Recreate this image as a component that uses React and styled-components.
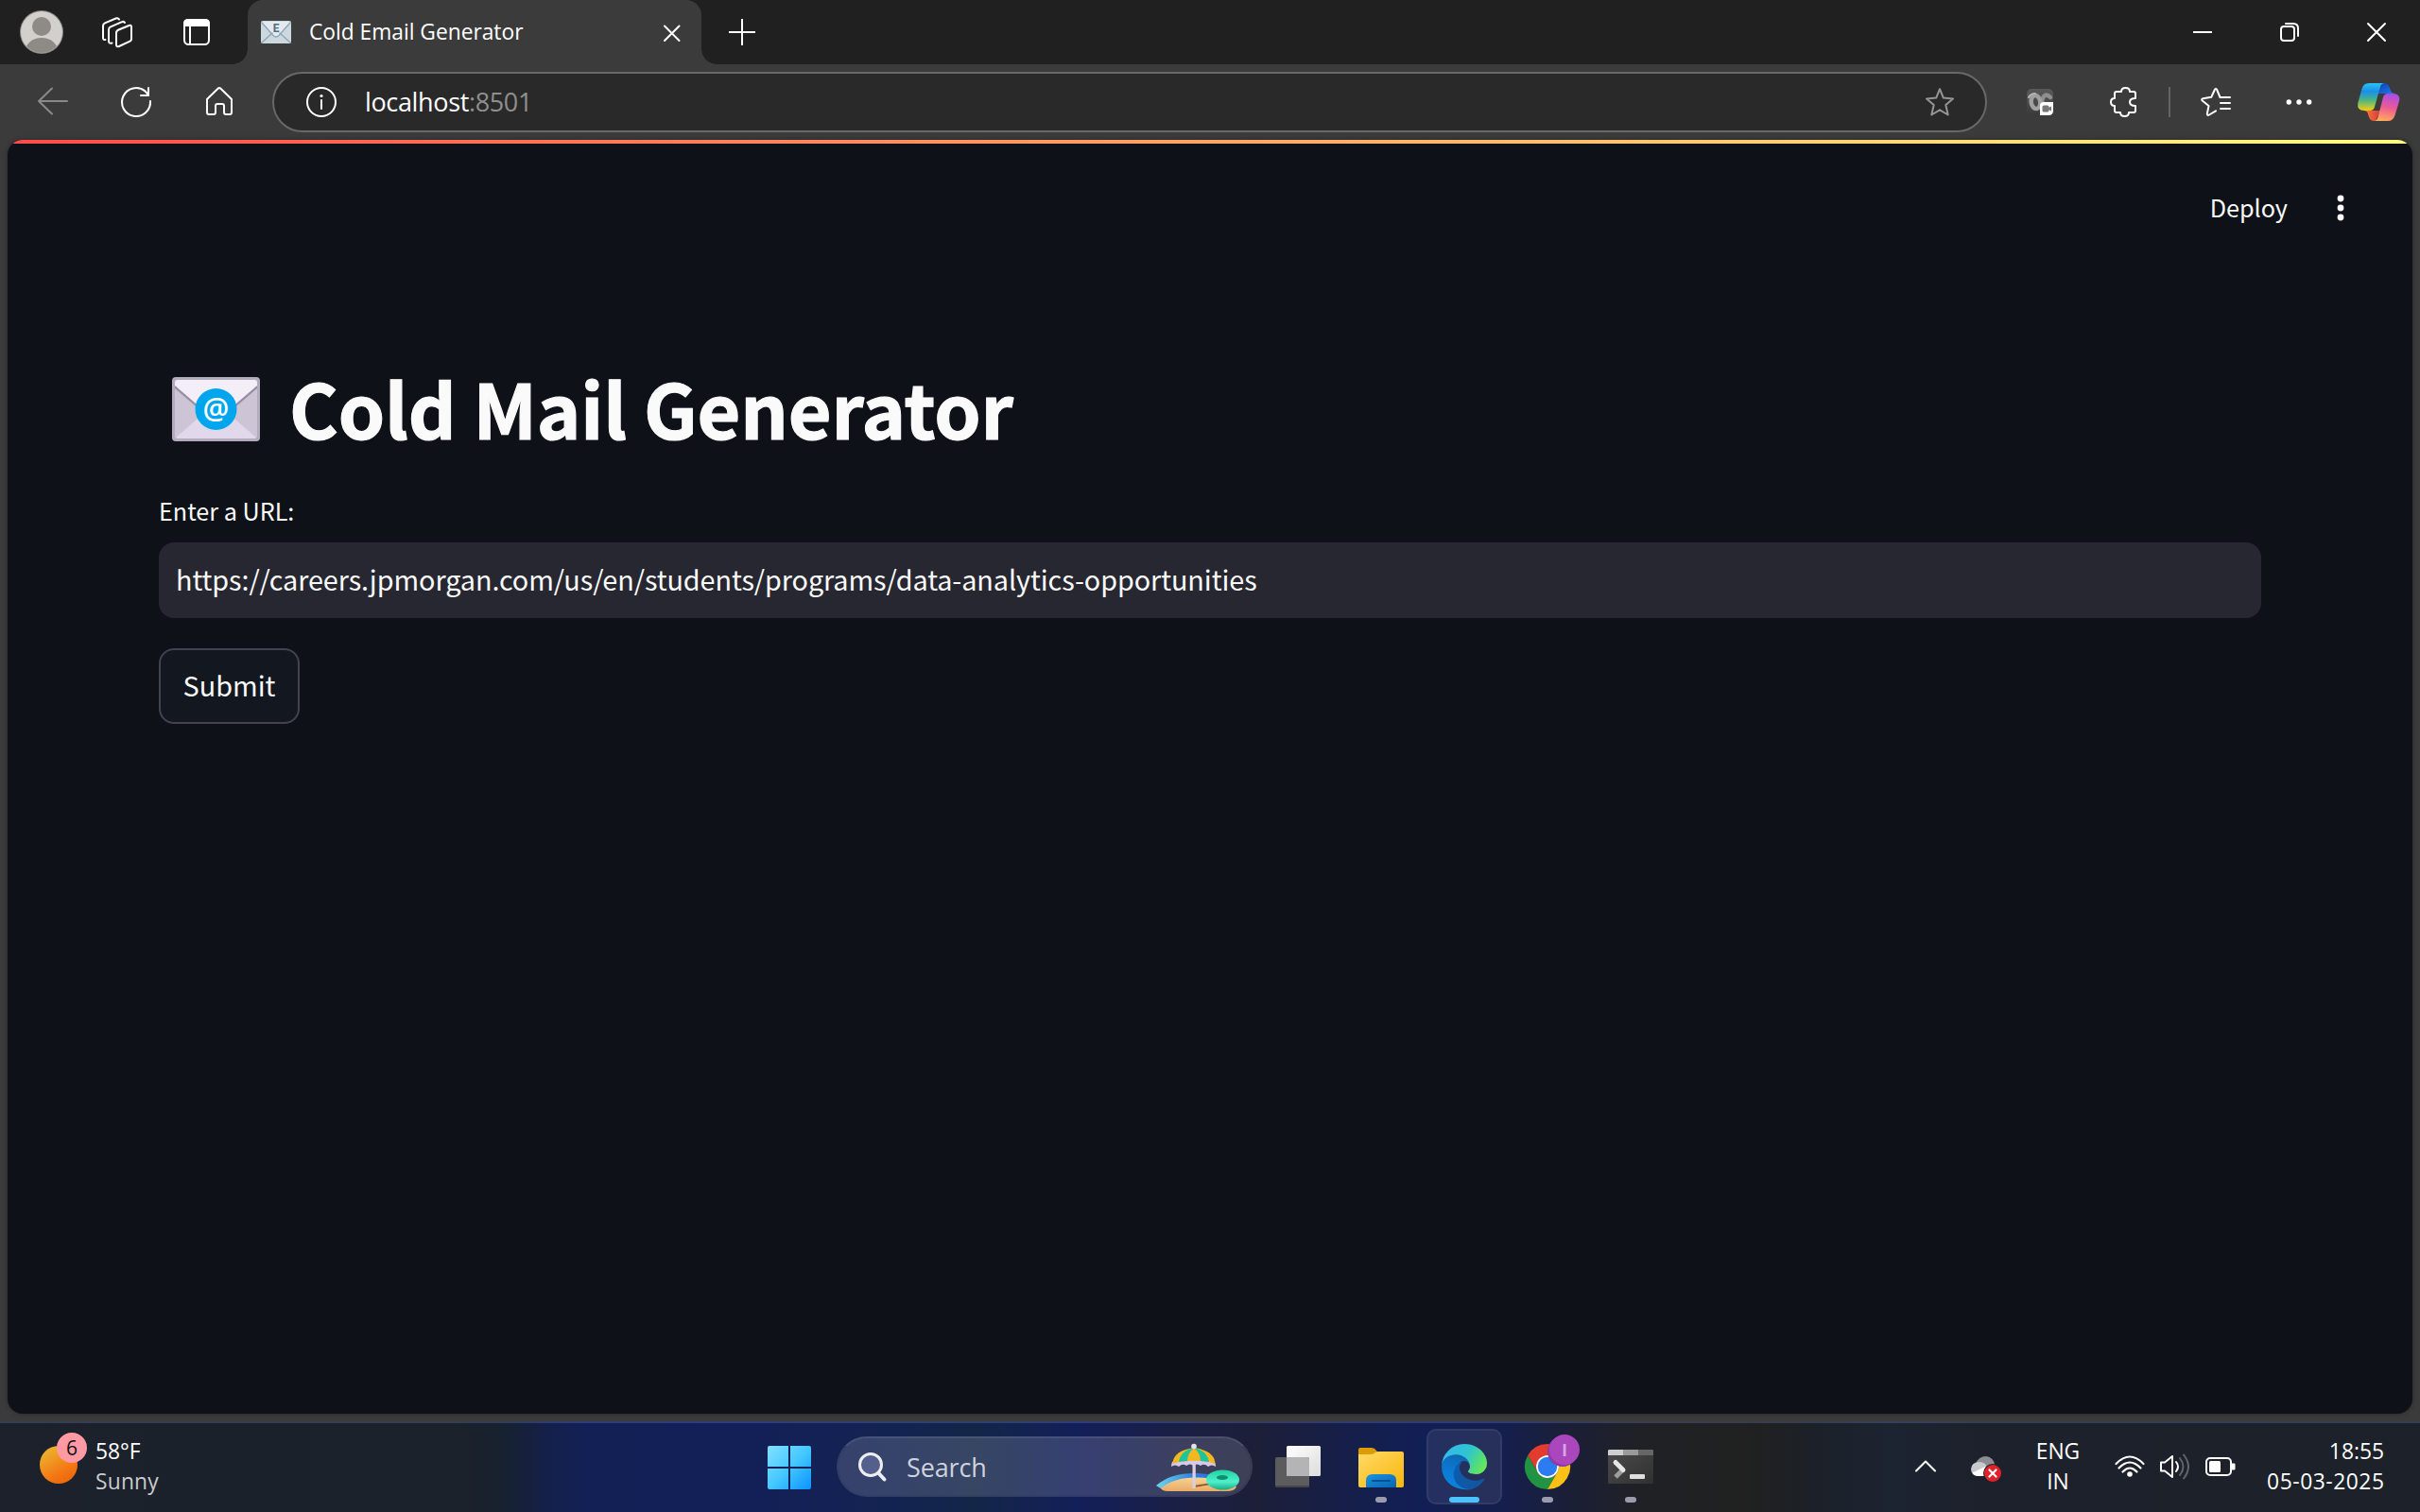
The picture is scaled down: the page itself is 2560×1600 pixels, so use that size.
import React from "react";
import styled, { createGlobalStyle } from "styled-components";

const ui = `"Open Sans", "Noto Sans", sans-serif`;
const source = `"Noto Sans CJK SC", "Noto Sans", sans-serif`;

const GlobalStyle = createGlobalStyle`
  * { box-sizing: border-box; }
  body { margin: 0; background: #3b3b3b; overflow: hidden; }
  button, input { font: inherit; color: inherit; }
`;

const Screen = styled.div`
  width: 2560px;
  height: 1600px;
  display: flex;
  flex-direction: column;
  background: #3b3b3b;
  color: #fff;
  font-family: ${ui};
`;

const Svg = styled.svg`
  display: block;
  flex: none;
  margin-left: ${(p) => p.$ml || 0}px;
  overflow: visible;
`;

function Icon({ box, ml, children, ...rest }) {
  const [, , w, h] = box.split(" ");
  return (
    <Svg viewBox={box} width={w} height={h} $ml={ml} fill="none" stroke="#fff" strokeWidth="2" strokeLinecap="round" strokeLinejoin="round" {...rest}>
      {children}
    </Svg>
  );
}

/* ---------- tab strip ---------- */
const TabStrip = styled.header`
  height: 68px;
  flex: none;
  display: flex;
  align-items: center;
  background: #202020;
  padding: 0 36px 0 21px;
`;

const Tab = styled.div`
  position: relative;
  width: 480px;
  height: 68px;
  margin-left: 38px;
  padding: 0 21px 0 14px;
  display: flex;
  align-items: center;
  background: #3b3b3b;
  border-radius: 16px 16px 0 0;
  &::before,
  &::after {
    content: "";
    position: absolute;
    bottom: 0;
    width: 16px;
    height: 16px;
  }
  &::before {
    left: -16px;
    background: radial-gradient(circle at 0 0, transparent 15.5px, #3b3b3b 16px);
  }
  &::after {
    right: -16px;
    background: radial-gradient(circle at 100% 0, transparent 15.5px, #3b3b3b 16px);
  }
`;

const TabTitle = styled.span`
  flex: 1;
  margin-left: 19px;
  font-size: 22.8px;
  letter-spacing: -0.02px;
  line-height: 32px;
  white-space: nowrap;
`;

const Spacer = styled.div`
  flex: 1;
`;

/* ---------- toolbar ---------- */
const Toolbar = styled.nav`
  height: 80px;
  flex: none;
  display: flex;
  align-items: center;
  padding: 0 22px 0 38px;
`;

const AddressBar = styled.div`
  width: 1814px;
  height: 64px;
  margin-left: 40px;
  padding: 0 30px 0 32px;
  display: flex;
  align-items: center;
  background: #292929;
  border: 2px solid #686868;
  border-radius: 32px;
`;

const Address = styled.span`
  flex: 1;
  margin-left: 28px;
  font-size: 27px;
  letter-spacing: -0.35px;
  line-height: 36px;
  span {
    color: #8f8f8f;
  }
`;

const Divider = styled.i`
  width: 2px;
  height: 32px;
  margin-left: 32px;
  background: #636363;
`;

/* ---------- page ---------- */
const Page = styled.main`
  width: 2544px;
  height: 1348px;
  flex: none;
  margin: 0 8px 8px;
  border-radius: 16px;
  overflow: hidden;
  background: #0e1117;
  box-shadow: 0 0 5px rgba(0, 0, 0, 0.35);
  color: #fafafa;
  font-family: ${source};
`;

const Decoration = styled.div`
  height: 4px;
  background: linear-gradient(90deg, #ff4b4b, #fffd80);
`;

const PageHeader = styled.div`
  height: 136px;
  display: flex;
  align-items: center;
  justify-content: flex-end;
  padding-right: 64px;
`;

const Deploy = styled.button`
  border: 0;
  padding: 0 0 3px;
  background: none;
  font-size: 25.2px;
  line-height: 40px;
`;

const Content = styled.section`
  width: 2224px;
  margin: 92px auto 0;
  display: flex;
  flex-direction: column;
  align-items: flex-start;
`;

const TitleRow = styled.div`
  height: 106px;
  display: flex;
  align-items: center;
  padding-left: 14px;
`;

const Title = styled.h1`
  margin: 0 0 0 31px;
  padding-bottom: 5px;
  font-size: 79px;
  font-weight: 700;
  letter-spacing: -0.1px;
  line-height: 106px;
  white-space: nowrap;
  -webkit-text-stroke: 1.2px #fafafa;
`;

const Label = styled.label`
  margin-top: 34px;
  font-size: 25.2px;
  line-height: 40px;
`;

const UrlInput = styled.input`
  width: 100%;
  height: 80px;
  margin-top: 14px;
  padding: 0 18px 4px;
  border: 0;
  border-radius: 16px;
  background: #262730;
  font-size: 28.8px;
  letter-spacing: -0.085px;
  line-height: 48px;
`;

const Submit = styled.button`
  width: 149px;
  height: 80px;
  margin-top: 32px;
  padding: 0 0 3px;
  border: 2px solid #41444c;
  border-radius: 16px;
  background: #131720;
  font-size: 28.8px;
  line-height: 48px;
`;

/* ---------- taskbar ---------- */
const Taskbar = styled.footer`
  height: 96px;
  flex: none;
  display: flex;
  align-items: center;
  padding: 0 38px 0 42px;
  box-shadow: inset 0 2px 0 rgba(160, 180, 255, 0.2);
  background: linear-gradient(
    90deg,
    #1c212b 0,
    #1b222b 480px,
    #18212f 530px,
    #14204a 580px,
    #122056 620px,
    #132058 800px,
    #132350 950px,
    #132648 1030px,
    #131f59 1140px,
    #191f48 1230px,
    #1d1f38 1330px,
    #151f4c 1437px,
    #121f55 1500px,
    #151f4d 1590px,
    #1b1f36 1660px,
    #202125 1740px,
    #202120 1850px,
    #1c212a 1930px,
    #1c2431 2000px,
    #1d212b 2100px,
    #1c212a 2560px
  );
`;

const Stack = styled.div`
  width: ${(p) => (p.$w ? p.$w + "px" : "auto")};
  margin-left: ${(p) => p.$ml || 0}px;
  text-align: ${(p) => p.$align || "left"};
  font-size: 22.8px;
  line-height: 32px;
  white-space: nowrap;
`;

const Line = styled.div`
  color: ${(p) => (p.$dim ? "#c9cbce" : "#fff")};
  letter-spacing: ${(p) => p.$ls || 0}px;
  margin-right: ${(p) => -(p.$ls || 0)}px;
`;

const SearchPill = styled.div`
  width: 440px;
  height: 64px;
  margin-left: 25px;
  padding: 0 10px 0 20px;
  display: flex;
  align-items: center;
  border: 2px solid rgba(255, 255, 255, 0.13);
  border-top-color: rgba(255, 255, 255, 0.22);
  border-radius: 32px;
  background: rgba(255, 255, 255, 0.15);
  background-clip: padding-box;
`;

const SearchText = styled.span`
  flex: 1;
  margin-left: 19px;
  padding-top: 2px;
  font-size: 27px;
  letter-spacing: -0.15px;
  line-height: 36px;
  color: #cfd2de;
`;

const Apps = styled.div`
  display: flex;
  gap: 8px;
  margin-left: 8px;
`;

const Tile = styled.div`
  width: 80px;
  height: 80px;
  border-radius: 10px;
  background: ${(p) => (p.$active ? "rgba(255,255,255,0.08)" : "none")};
  box-shadow: ${(p) => (p.$active ? "inset 0 0 0 2px rgba(255,255,255,0.06)" : "none")};
`;

const Indicator = ({ x, active }) =>
  active ? (
    <rect x={x - 16} y="1584" width="32" height="6" rx="3" fill="#4cc2ff" stroke="none" />
  ) : (
    <rect x={x - 6} y="1584" width="12" height="6" rx="3" fill="#9a9cae" stroke="none" />
  );

function TopTabs() {
  return (
    <TabStrip>
      <Icon box="21 11 46 46" stroke="none">
        <clipPath id="av"><circle cx="44" cy="34" r="22" /></clipPath>
        <circle cx="44" cy="34" r="23" fill="#8e8a86" />
        <circle cx="44" cy="34" r="22" fill="#d2d0cc" />
        <g clipPath="url(#av)" fill="#8e8a86">
          <circle cx="44" cy="28" r="10" />
          <ellipse cx="44" cy="54" rx="17" ry="14" />
        </g>
      </Icon>
      <Icon box="106 16 36 36" ml={39}>
        <path d="M125.5 31.5 L136.5 27 Q139 26.2 139 28.5 V41.5 Q139 43 137.5 43.7 L126 49 Q123 50 123 47.5 V35 Q123 32.5 125.5 31.5Z" />
        <path d="M118.5 45.5 Q115 46.5 115 43.5 V31.5 Q115 29.3 117 28.4 L128.5 23.3 Q131 22.2 132 24" />
        <path d="M111.5 42 Q109 42.5 109 40 V27.5 Q109 25.2 111 24.3 L122.5 19.5 Q125 18.5 126 20.5" />
      </Icon>
      <Icon box="192 18 32 32" ml={50}>
        <rect x="195" y="21" width="26" height="26" rx="4.5" />
        <path d="M195 27 V25 Q195 21 199 21 H217 Q221 21 221 25 V27Z" fill="#fff" />
        <path d="M201 28 V46" />
      </Icon>
      <Tab>
        <Icon box="276 22 32 24" stroke="none">
          <rect x="276" y="22" width="32" height="24" rx="2" fill="#cbd8e0" />
          <path d="M277 23 L289 37 Q292 40 295 37 L307 23Z" fill="#e3ebf0" />
          <path d="M277 45 L288 35 M307 45 L296 35" stroke="#94a6b2" strokeWidth="1.4" />
          <path d="M277 24 L289 37.5 Q292 40.5 295 37.5 L307 24" stroke="#94a6b2" strokeWidth="1.4" />
          <text x="292" y="34" textAnchor="middle" fontFamily="Roboto, sans-serif" fontWeight="700" fontSize="12" fill="#546b79">E</text>
        </Icon>
        <TabTitle>Cold Email Generator</TabTitle>
        <Icon box="701 24 20 20"><path d="M703 27.500 L718.500 43 M718.500 27.500 L703 43" /></Icon>
      </Tab>
      <Icon box="769 17 32 32" ml={27} strokeLinecap="butt"><path d="M771 33 H799 M785 19 V47" /></Icon>
      <Spacer />
      <Icon box="2320 24 20 20" strokeLinecap="butt"><path d="M2320 34 H2340" /></Icon>
      <Icon box="2412 24 20 20" ml={72}>
        <rect x="2413" y="28" width="14" height="15" rx="3" />
        <path d="M2418 25 H2426 Q2431 25 2431 30 V38" />
      </Icon>
      <Icon box="2504 24 20 20" ml={72}><path d="M2505 25 L2523 43 M2523 25 L2505 43" /></Icon>
    </TabStrip>
  );
}

const STAR = "M2052 94.2 L2055.8 103.6 L2066 104.4 L2058.3 111 L2060.7 121.5 L2052 116.3 L2043.3 121.5 L2045.7 111 L2038 104.4 L2048.2 103.6Z";

function BrowserBar() {
  return (
    <Toolbar>
      <Icon box="38 91 34 34" stroke="#8a8a8a"><path d="M71 108 H41 M55 94.500 L41 108 L55 121.500" transform="translate(0 -1)" /></Icon>
      <Icon box="126 90 36 36" ml={54}>
        <path d="M159 107 A15 15 0 1 1 153.5 96.4 L157 100.500" />
        <path d="M157 93 V101 H149" strokeLinejoin="miter" />
      </Icon>
      <Icon box="216 90 32 36" ml={54}>
        <path d="M219 105 L230.5 93.8 Q232 92.5 233.5 93.8 L245 105 V119 Q245 121 243 121 H239 Q237 121 237 119 V112 Q237 110 235 110 H230 Q228 110 228 112 V119 Q228 121 226 121 H221 Q219 121 219 119Z" />
      </Icon>
      <AddressBar>
        <Icon box="322 90 36 36">
          <circle cx="340" cy="108" r="15" />
          <path d="M340 106 V115" />
          <circle cx="340" cy="101.5" r="1.6" fill="#fff" stroke="none" />
        </Icon>
        <Address>localhost<span>:8501</span></Address>
        <Icon box="2034 90 36 36" stroke="#959595"><path d={STAR} /></Icon>
      </AddressBar>
      <Icon box="2144 94 28 28" ml={42} stroke="none">
        <defs>
          <linearGradient id="ext" x2="0" y2="1"><stop stopColor="#5a5a5a" /><stop offset="1" stopColor="#3a3a3a" /></linearGradient>
        </defs>
        <rect x="2144" y="94" width="28" height="28" rx="5" fill="url(#ext)" />
        <path d="M2169 103 Q2165 99 2162 102 Q2159 106 2161 112" stroke="#8f8f8f" strokeWidth="4.500" />
        <ellipse cx="2153.500" cy="108" rx="4.800" ry="7" stroke="#a0a0a0" strokeWidth="4.500" transform="rotate(-8 2153.500 108)" />
        <path d="M2146 103 Q2148 99 2153 99" stroke="#b5b5b5" strokeWidth="2" />
        <path d="M2162 108 H2172 V117 Q2172 122 2167 122 H2158 V112 Q2158 108 2162 108Z" fill="#fff" />
        <rect x="2160.5" y="111.5" width="7" height="7" rx="1.5" fill="#777" />
        <path d="M2167 114 L2170 112.5 V117.5 L2167 116Z" fill="#777" />
      </Icon>
      <Icon box="2230 90 32 36" ml={58}>
        <path d="M2239 97 H2244 Q2244 93 2248.5 93 Q2253 93 2253 97 H2257 Q2259 97 2259 99 V104 Q2253 104 2253 108 Q2253 112 2259 112 V117 Q2259 119 2257 119 H2252 Q2252 123 2247.5 123 Q2243 123 2243 119 H2239 Q2237 119 2237 117 V112 Q2233 112 2233 108 Q2233 104 2237 104 V99 Q2237 97 2239 97Z" />
      </Icon>
      <Divider />
      <Icon box="2326 90 36 36" ml={30}>
        <path d="M2359 103 H2348.5 L2345.200 95 Q2344 93 2342.800 95 L2339.2 102.800 L2330.500 104.200 Q2328 105 2330 106.800 L2336.500 112 L2334.800 120.500 Q2335 122.800 2337 121.500 L2344 117.300" />
        <path d="M2349 109 H2359 M2349 115 H2359" />
      </Icon>
      <Icon box="2417 93 30 30" ml={55} stroke="none" fill="#fff">
        <circle cx="2421.3" cy="108" r="2.7" /><circle cx="2432" cy="108" r="2.7" /><circle cx="2442.7" cy="108" r="2.7" />
      </Icon>
      <Icon box="2494 88 44 40" ml={47} stroke="none">
        <defs>
          <linearGradient id="cp1" x1="0" y1="0" x2="0" y2="1"><stop stopColor="#2cc3f5" /><stop offset=".3" stopColor="#1b8fe8" /><stop offset=".6" stopColor="#45b38a" /><stop offset="1" stopColor="#f4cf10" /></linearGradient>
          <linearGradient id="cp2" x1="0" y1="0" x2="1" y2="1"><stop stopColor="#0a3fb5" /><stop offset="1" stopColor="#1f7ff0" /></linearGradient>
          <linearGradient id="cp3" x1=".6" y1="0" x2=".4" y2="1"><stop stopColor="#a74ee8" /><stop offset=".5" stopColor="#ee5a92" /><stop offset="1" stopColor="#ffac5c" /></linearGradient>
          <linearGradient id="cp4" x1="0" y1="0" x2="1" y2="0"><stop stopColor="#ff8040" /><stop offset="1" stopColor="#d83a35" /></linearGradient>
        </defs>
        <path d="M2515 99 L2519 91 Q2520 88 2522 88 Q2526 88 2527.5 92 L2529 96 Q2530 99 2534 99Z" fill="url(#cp2)" />
        <path d="M2518 117 L2514 126 Q2513 128 2511.5 128 Q2507.500 128 2506 124 L2504.800 120 Q2504 117 2500 117Z" fill="url(#cp4)" />
        <path d="M2506 88 H2523 Q2519 88 2518 92 L2512 113 Q2511 117 2507 117 H2501 Q2493 117 2494.300 109 L2498.500 94 Q2500 88 2506 88Z" fill="url(#cp1)" />
        <path d="M2526 99 H2531.500 Q2539.500 99 2538 107 L2533.500 122 Q2531.500 128 2526 128 H2510.500 Q2514.500 128 2515.500 124 L2521 103 Q2522 99 2526 99Z" fill="url(#cp3)" />
      </Icon>
    </Toolbar>
  );
}

function StreamlitPage() {
  return (
    <Page>
      <Decoration />
      <PageHeader>
        <Deploy>Deploy</Deploy>
        <Icon box="2464 204 24 32" ml={44} stroke="none" fill="#fafafa">
          <circle cx="2476" cy="210" r="3.4" /><circle cx="2476" cy="220" r="3.4" /><circle cx="2476" cy="230" r="3.4" />
        </Icon>
      </PageHeader>
      <Content>
        <TitleRow>
          <Icon box="182 399 93 68" stroke="none">
            <rect x="182" y="399" width="93" height="68" rx="4" fill="#b4acbc" />
            <rect x="185" y="402" width="87" height="62" rx="3" fill="#cdc4d6" />
            <path d="M186 463 L216 437 Q228.500 428 241 437 L271 463 Q270 464 269 464 H188Z" fill="#e1d8ec" />
            <path d="M185 411 L220 441 Q228.500 447 237 441 L272 411 V406 H185Z" fill="#998ea2" />
            <path d="M185 408 V405 Q185 402 188 402 H269 Q272 402 272 405 V408 L236 439 Q228.500 444 221 439Z" fill="#f3eef8" />
            <circle cx="228.500" cy="433" r="22" fill="#00a6ed" />
            <text x="228.500" y="442.500" textAnchor="middle" fontFamily="Open Sans, sans-serif" fontWeight="600" fontSize="31" fill="#fff">@</text>
          </Icon>
          <Title>Cold Mail Generator</Title>
        </TitleRow>
        <Label htmlFor="url">Enter a URL:</Label>
        <UrlInput id="url" readOnly value="https://careers.jpmorgan.com/us/en/students/programs/data-analytics-opportunities" />
        <Submit>Submit</Submit>
      </Content>
    </Page>
  );
}

function WindowsTaskbar() {
  return (
    <Taskbar>
      <Icon box="42 1512 50 80" stroke="none">
        <linearGradient id="sun" x1=".2" y1="0" x2=".8" y2="1"><stop stopColor="#ecb731" /><stop offset=".7" stopColor="#f37512" /><stop offset="1" stopColor="#e9650a" /></linearGradient>
        <circle cx="62" cy="1550" r="20" fill="url(#sun)" />
        <circle cx="76" cy="1532" r="16" fill="#ff99a4" />
        <text x="76" y="1540" textAnchor="middle" fontFamily="Open Sans, sans-serif" fontSize="21" fill="#111">6</text>
      </Icon>
      <Stack $ml={9} $w={119}>
        <Line>58°F</Line>
        <Line $dim $ls={0.2}>Sunny</Line>
      </Stack>

      <Icon box="810 1526 50 52" ml={590} stroke="none">
        <linearGradient id="win" gradientUnits="userSpaceOnUse" x1="812" y1="1530" x2="858" y2="1576"><stop stopColor="#84e0ff" /><stop offset=".5" stopColor="#45c8ff" /><stop offset="1" stopColor="#0a93ff" /></linearGradient>
        <g transform="translate(0 0)">
          <path fill="url(#win)" d="M814 1530 H834 V1552 H812 V1532 Q812 1530 814 1530Z M836 1530 H856 Q858 1530 858 1532 V1552 H836Z M812 1554 H834 V1576 H814 Q812 1576 812 1574Z M836 1554 H858 V1574 Q858 1576 856 1576 H836Z" />
        </g>
      </Icon>

      <SearchPill>
        <Icon box="907 1535 33 34" stroke="#eceef2">
          <circle cx="921" cy="1550" r="11.500" strokeWidth="3" fill="rgba(180,185,240,.25)" />
          <path d="M929.500 1559 L935.500 1565.500" strokeWidth="4" />
        </Icon>
        <SearchText>Search</SearchText>
        <Icon box="1224 1524 90 56" stroke="none">
          <defs>
            <linearGradient id="sea"><stop stopColor="#6fd6ea" /><stop offset=".5" stopColor="#2f7de0" /><stop offset="1" stopColor="#2a6fe0" /></linearGradient>
            <linearGradient id="sand" x2="0" y2="1"><stop stopColor="#f6d391" /><stop offset="1" stopColor="#e9ab68" /></linearGradient>
            <linearGradient id="ring" x2="0" y2="1"><stop stopColor="#1fd3a0" /><stop offset=".6" stopColor="#4ff0cd" /><stop offset="1" stopColor="#17ab84" /></linearGradient>
          </defs>
          <path d="M1224 1572 Q1240 1558 1268 1559 Q1290 1560 1304 1566 L1280 1572 L1232 1577Z" fill="url(#sea)" />
          <path d="M1229 1575 Q1243 1563 1268 1563.500 Q1295 1564 1309 1573 Q1308 1578 1298 1578 H1236 Q1231 1578 1229 1575Z" fill="url(#sand)" />
          <path d="M1264 1573 L1282 1570" stroke="#8c5a2e" strokeWidth="1.800" />
          <path d="M1262.500 1546 H1265.800 V1575 H1262.500Z" fill="#d9cfe0" />
          <path d="M1240 1552 Q1240 1546 1244 1545 H1284 Q1287 1547 1287 1552 Q1283 1549 1279 1552 Q1275 1548 1271 1551 Q1267 1548 1263.500 1551 Q1260 1548 1256 1551 Q1252 1548 1248 1552 Q1244 1549 1240 1552Z" fill="#d8c8ea" />
          <path d="M1241.500 1549 Q1242 1535 1264 1532 Q1286 1535 1286.500 1549 Q1275 1545 1264 1546 Q1252 1545 1241.500 1549Z" fill="#f2b81f" />
          <path d="M1248 1547 Q1250 1535 1264 1532 Q1257 1538 1257 1546Z M1280 1547 Q1278 1535 1264 1532 Q1271 1538 1271 1546Z" fill="#1fc49a" />
          <circle cx="1264" cy="1530.500" r="2.800" fill="#eadff0" />
          <ellipse cx="1294.500" cy="1566" rx="17.500" ry="10.500" fill="url(#ring)" />
          <ellipse cx="1294" cy="1563.500" rx="6" ry="2.600" fill="#0d8f70" />
        </Icon>
      </SearchPill>

      <Apps>
        <Tile>
          <Icon box="1333 1512 80 80" stroke="none">
            <linearGradient id="tv" x2="1" y2="1"><stop stopColor="#fff" /><stop offset="1" stopColor="#dcdcdc" /></linearGradient>
            <rect x="1361" y="1530" width="36" height="32" rx="1.500" fill="url(#tv)" />
            <rect x="1349" y="1542" width="36" height="32" rx="2" fill="#5c5c5e" />
            <path d="M1361 1542 H1383 Q1385 1542 1385 1544 V1562 H1361Z" fill="#b4b4b6" />
            <path d="M1349 1572 H1385 Q1385 1574 1383 1574 H1351 Q1349 1574 1349 1572Z" fill="#454547" />
          </Icon>
        </Tile>
        <Tile>
          <Icon box="1421 1512 80 80" stroke="none">
            <defs>
              <linearGradient id="fold" x2="1" y2="1"><stop stopColor="#ffda68" /><stop offset="1" stopColor="#f9b60a" /></linearGradient>
              <linearGradient id="fb" x2="1" y2="1"><stop stopColor="#1b95e0" /><stop offset="1" stopColor="#0664b4" /></linearGradient>
            </defs>
            <path d="M1437 1534 Q1437 1532 1439 1532 H1451 Q1454 1532 1456 1535 L1458 1538 L1450 1542 H1437Z" fill="#dd9c06" />
            <path d="M1437 1539 H1450 Q1453 1539 1455 1537 Q1456 1536 1458 1536 H1483 Q1485 1536 1485 1538 V1572 Q1485 1574 1483 1574 H1439 Q1437 1574 1437 1572Z" fill="url(#fold)" />
            <path d="M1445 1574 V1567 Q1445 1560 1452 1560 H1470 Q1477 1560 1477 1567 V1574Z" fill="url(#fb)" />
            <path d="M1452 1567 H1470" stroke="#0a4f93" strokeWidth="2" />
            <Indicator x={1461} />
          </Icon>
        </Tile>
        <Tile $active>
          <Icon box="1509 1512 80 80" stroke="none">
            <defs>
              <linearGradient id="e1" x1=".3" y1="0" x2="1" y2=".5"><stop stopColor="#0d5cae" /><stop offset="1" stopColor="#12569f" /></linearGradient>
              <linearGradient id="e2" x1=".5" y1="0" x2=".3" y2="1"><stop stopColor="#0f66ad" /><stop offset=".5" stopColor="#0b79d4" /><stop offset="1" stopColor="#0a86e0" /></linearGradient>
              <linearGradient id="e3" x1="0" y1=".3" x2="1" y2=".7"><stop stopColor="#35b8ee" /><stop offset=".5" stopColor="#2fc5cf" /><stop offset=".8" stopColor="#52dc7e" /><stop offset="1" stopColor="#69ea55" /></linearGradient>
            </defs>
            <g transform="translate(1525 1528) scale(.1875)">
              <path fill="url(#e1)" d="M235.680 195.460a93.730 93.730 0 0 1-10.540 4.710 101.870 101.870 0 0 1-35.900 6.460c-47.320 0-88.540-32.550-88.540-74.320a31.480 31.480 0 0 1 16.430-27.310c-42.800 1.800-53.800 46.400-53.800 72.530 0 73.880 68.090 81.370 82.760 81.370 7.910 0 19.840-2.300 27-4.560l1.310-.44a128.340 128.340 0 0 0 66.600-52.800 4 4 0 0 0-5.320-5.640z" />
              <path fill="url(#e2)" d="M105.730 241.420a79.200 79.200 0 0 1-22.740-21.340 80.720 80.720 0 0 1 29.530-120c3.120-1.470 8.450-4.130 15.540-4a32.350 32.350 0 0 1 25.690 13 31.880 31.880 0 0 1 6.360 18.660c0-.21 24.460-79.600-80-79.600-43.900 0-80 41.660-80 78.210a130.150 130.150 0 0 0 12.110 56 128 128 0 0 0 156.380 67.110 75.550 75.550 0 0 1-62.780-8z" />
              <path fill="url(#e3)" d="M152.330 148.860c-.81 1.050-3.300 2.500-3.300 5.660 0 2.610 1.700 5.120 4.720 7.230 14.380 10 41.490 8.680 41.560 8.680a59.560 59.560 0 0 0 30.270-8.350 61.380 61.380 0 0 0 30.430-52.880c.26-22.410-8-37.310-11.340-43.910C223.460 23.840 177.720 0 128 0A128 128 0 0 0 0 126.200c.48-36.540 36.800-66.050 80-66.050 3.500 0 23.460.34 42 10.070 16.340 8.580 24.900 18.940 30.850 29.210 6.180 10.670 7.280 24.150 7.280 29.520s-2.740 13.330-7.800 19.910z" />
            </g>
            <Indicator x={1549} active />
          </Icon>
        </Tile>
        <Tile>
          <Icon box="1597 1512 80 80" stroke="none">
            <g transform="translate(1613 1528)">
              <path fill="#e33b2e" d="M3.200 12 A24 24 0 0 1 44.800 12 L24 12 A12 12 0 0 0 13.600 30Z" />
              <path fill="#229342" d="M3.200 12 L13.600 30 A12 12 0 0 0 34.400 30 L24 48 A24 24 0 0 1 3.200 12Z" />
              <path fill="#fbc116" d="M24 12 H44.800 A24 24 0 0 1 24 48 L34.400 30 A12 12 0 0 0 24 12Z" />
              <circle cx="24" cy="24" r="12" fill="#fff" />
              <circle cx="24" cy="24" r="10.200" fill="#2a7cf0" />
            </g>
            <circle cx="1653" cy="1536" r="16" fill="#8f3aa6" />
            <circle cx="1655" cy="1534" r="16" fill="#ab47bc" />
            <text x="1655" y="1541" textAnchor="middle" fontFamily="Roboto, sans-serif" fontWeight="700" fontSize="19" fill="#d7a6e0">I</text>
            <Indicator x={1637} />
          </Icon>
        </Tile>
        <Tile>
          <Icon box="1685 1512 80 80" stroke="none">
            <defs>
              <linearGradient id="tm" x2="1" y2="1"><stop stopColor="#4c4c4c" /><stop offset="1" stopColor="#303030" /></linearGradient>
            </defs>
            <rect x="1701" y="1534" width="48" height="36" rx="1.500" fill="url(#tm)" />
            <path d="M1702 1534 H1717 V1540 H1701 V1535Z" fill="#cfcfcf" />
            <path d="M1717 1534 H1733 V1540 H1717Z" fill="#9a9a9a" />
            <path d="M1733 1534 H1748 L1749 1535 V1540 H1733Z" fill="#666" />
            <path d="M1717 1555 L1709 1563" stroke="#9c9c9c" strokeWidth="5" strokeLinecap="butt" />
            <path d="M1709 1547.500 L1717 1555.500" stroke="#e6e6e6" strokeWidth="5" />
            <rect x="1724" y="1560" width="16" height="5" rx="1" fill="#dedede" />
            <Indicator x={1725} />
          </Icon>
        </Tile>
      </Apps>

      <Icon box="2024 1539 26 26" ml={259}><path d="M2027 1556.500 L2037 1546.500 L2047 1556.500" /></Icon>
      <Icon box="2083 1534 36 36" ml={33} stroke="none">
        <path d="M2090 1549 Q2093 1541 2101 1541 Q2109 1542 2110.500 1551 L2100 1556Z" fill="#8b8d92" />
        <path d="M2092 1562 Q2085 1561 2085 1554.500 Q2085.500 1547.500 2093 1547 Q2098 1547 2101 1550 L2100 1562Z" fill="#c9cacc" />
        <path d="M2086.500 1558.500 L2100 1552 V1562 H2092 Q2088 1561.500 2086.500 1558.500Z" fill="#fff" />
        <circle cx="2108" cy="1559" r="10" fill="#1c212a" />
        <circle cx="2108" cy="1559" r="9" fill="#e0222b" />
        <path d="M2104.500 1555.500 L2111.500 1562.500 M2111.500 1555.500 L2104.500 1562.500" stroke="#fff" strokeWidth="2.200" />
      </Icon>
      <Stack $ml={28} $w={60} $align="center">
        <Line>ENG</Line>
        <Line>IN</Line>
      </Stack>
      <Icon box="2235 1534 36 36" ml={28} strokeWidth="2.200">
        <path d="M2238.500 1549 Q2253 1534 2267.500 1549 M2241.500 1553.500 Q2253 1541.500 2264.500 1553.500 M2245.500 1557.500 Q2253 1549.500 2260.500 1557.500" />
        <circle cx="2253" cy="1560" r="2.800" fill="#fff" stroke="none" />
      </Icon>
      <Icon box="2283 1534 36 36" ml={12}>
        <path d="M2286 1547.500 H2290 L2298 1541 V1563 L2290 1556.500 H2286Z" />
        <path d="M2302 1547 Q2306 1552 2302 1557" />
        <path d="M2306 1543 Q2313 1552 2306 1561 M2310 1539.500 Q2320 1552 2310 1564.500" stroke="#60646b" />
      </Icon>
      <Icon box="2331 1534 36 36" ml={12}>
        <rect x="2334" y="1543" width="26" height="18" rx="4" />
        <rect x="2337" y="1546" width="12" height="12" rx="1.500" fill="#fff" stroke="none" />
        <path d="M2361 1549 H2364 V1555 H2361Z" fill="#fff" strokeWidth="1" />
      </Icon>
      <Spacer />
      <Stack $align="right">
        <Line>18:55</Line>
        <Line $ls={0.55}>05-03-2025</Line>
      </Stack>
    </Taskbar>
  );
}

export default function App() {
  return (
    <Screen>
      <GlobalStyle />
      <TopTabs />
      <BrowserBar />
      <StreamlitPage />
      <WindowsTaskbar />
    </Screen>
  );
}
